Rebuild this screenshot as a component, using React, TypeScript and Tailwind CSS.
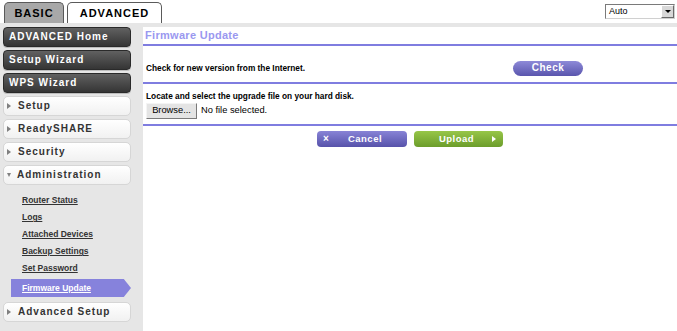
import React from "react";

const DarkBtn = ({ label }: { label: string }) => (
  <div className="h-[20px] mb-[3px] rounded-[4px] border border-[#2a2a2a] bg-gradient-to-b from-[#616161] to-[#353535] flex items-center pl-[5px] text-white font-bold text-[10px] tracking-[1px] leading-none shadow-[0_1px_0_#bdbdbd]">
    {label}
  </div>
);

const WhiteBtn = ({ label, open }: { label: string; open?: boolean }) => (
  <div className="h-[20px] mb-[3px] rounded-[5px] border border-[#d6d6d6] bg-gradient-to-b from-white to-[#f1f1f1] flex items-center pl-[2px] text-[#333] font-bold text-[10px] tracking-[1px] leading-none">
    {open ? (
      <span className="w-0 h-0 border-x-[2.5px] border-x-transparent border-t-[4px] border-t-[#808080] mr-[6px] ml-[1px]" />
    ) : (
      <span className="w-0 h-0 border-y-[3px] border-y-transparent border-l-[4px] border-l-[#808080] mr-[7px] ml-[1px]" />
    )}
    {label}
  </div>
);

const SubItem = ({ label }: { label: string }) => (
  <div className="h-[17px] flex items-center pl-[19px] text-[8.5px] font-bold text-[#333] underline leading-none">
    {label}
  </div>
);

export default function App() {
  return (
    <div className="w-[677px] h-[331px] overflow-hidden bg-white font-['Liberation_Sans',Arial,sans-serif] flex flex-col">
      {/* header */}
      <div className="h-[23px] flex justify-between shrink-0">
        <div className="flex items-end pl-[4px] gap-[3px]">
          <div className="w-[60px] h-[21px] rounded-t-[5px] border border-b-0 border-[#5a5a5a] bg-[#a8a8a8] flex items-center justify-center text-[11px] font-bold tracking-[1px] text-black leading-none">
            BASIC
          </div>
          <div className="w-[95px] h-[21px] rounded-t-[5px] border border-b-0 border-[#5a5a5a] bg-white flex items-center justify-center text-[11px] font-bold tracking-[1px] text-black leading-none">
            ADVANCED
          </div>
        </div>
        <div className="mt-[4px] mr-[2px] w-[70px] h-[15px] border border-t-[#7a7a7a] border-l-[#7a7a7a] border-r-[#d0d0d0] border-b-[#d0d0d0] bg-white flex items-center justify-between">
          <span className="pl-[3px] text-[9px] text-black leading-none">Auto</span>
          <span className="w-[13px] h-[13px] bg-[#d8d8d8] border border-t-white border-l-white border-r-[#6a6a6a] border-b-[#6a6a6a] flex items-center justify-center">
            <span className="w-0 h-0 border-x-[3px] border-x-transparent border-t-[3px] border-t-black" />
          </span>
        </div>
      </div>

      {/* body */}
      <div className="flex flex-1">
        <div className="w-[143px] bg-[#e6e6e6] pt-[4px] pl-[3px] pr-[12px] shrink-0">
          <DarkBtn label="ADVANCED Home" />
          <DarkBtn label="Setup Wizard" />
          <DarkBtn label="WPS Wizard" />
          <WhiteBtn label="Setup" />
          <WhiteBtn label="ReadySHARE" />
          <WhiteBtn label="Security" />
          <WhiteBtn label="Administration" open />
          <div className="mt-[7px]">
            <SubItem label="Router Status" />
            <SubItem label="Logs" />
            <SubItem label="Attached Devices" />
            <SubItem label="Backup Settings" />
            <SubItem label="Set Password" />
          </div>
          <div className="mt-[2px] ml-[8px] w-[120px] h-[18px] bg-[#8682dc] [clip-path:polygon(0_0,94%_0,100%_50%,94%_100%,0_100%)] flex items-center pl-[11px] text-[8.5px] font-bold text-white underline leading-none">
            Firmware Update
          </div>
          <div className="mt-[5px]">
            <WhiteBtn label="Advanced Setup" />
          </div>
        </div>

        <div className="flex-1 border-t-[4px] border-[#e6e6e6] flex flex-col">
          <div className="h-[17px] flex items-center pl-[2px] text-[11px] font-bold text-[#9a98f0] tracking-[0.3px] leading-none">
            Firmware Update
          </div>
          <div className="h-[2px] bg-[#7f7de0]" />
          <div className="h-[36px] pt-[8px] flex items-center">
            <div className="w-[370px] pl-[3px] text-[8.3px] font-bold text-black leading-none">
              Check for new version from the Internet.
            </div>
            <div className="w-[70px] h-[15px] rounded-full bg-gradient-to-b from-[#8e8ad8] to-[#5a55ad] flex items-center justify-center text-white text-[10px] font-bold tracking-[0.5px] leading-none">
              Check
            </div>
          </div>
          <div className="h-[2px] bg-[#7f7de0]" />
          <div className="pt-[6px] pb-[5px] pl-[3px]">
            <div className="h-[12px] flex items-center text-[8.3px] font-bold text-black leading-none">
              Locate and select the upgrade file on your hard disk.
            </div>
            <div className="mt-[1px] h-[16px] flex items-center">
              <div className="w-[51px] h-[16px] bg-[#e4e4e4] border border-t-[#f4f4f4] border-l-[#f4f4f4] border-r-[#7a7a7a] border-b-[#7a7a7a] flex items-center justify-center text-[9.3px] text-black leading-none">
                Browse...
              </div>
              <span className="ml-[4px] text-[9.3px] text-black leading-none">No file selected.</span>
            </div>
          </div>
          <div className="h-[2px] bg-[#7f7de0]" />
          <div className="mt-[5px] flex justify-center gap-[7px]">
            <div className="w-[90px] h-[16px] rounded-[4px] bg-gradient-to-b from-[#8883d6] to-[#5752aa] flex items-center text-white font-bold leading-none relative">
              <span className="absolute left-[6px] text-[10px]">×</span>
              <span className="w-full text-center text-[9.5px] tracking-[0.5px] pl-[6px]">Cancel</span>
            </div>
            <div className="w-[89px] h-[16px] rounded-[4px] bg-gradient-to-b from-[#97c648] to-[#6c9d2b] flex items-center text-white font-bold leading-none relative">
              <span className="w-full text-center text-[9.5px] tracking-[0.5px] pr-[4px]">Upload</span>
              <span className="absolute right-[7px] top-[5px] w-0 h-0 border-y-[3px] border-y-transparent border-l-[4px] border-l-white" />
            </div>
          </div>
        </div>
      </div>
    </div>
  );
}
